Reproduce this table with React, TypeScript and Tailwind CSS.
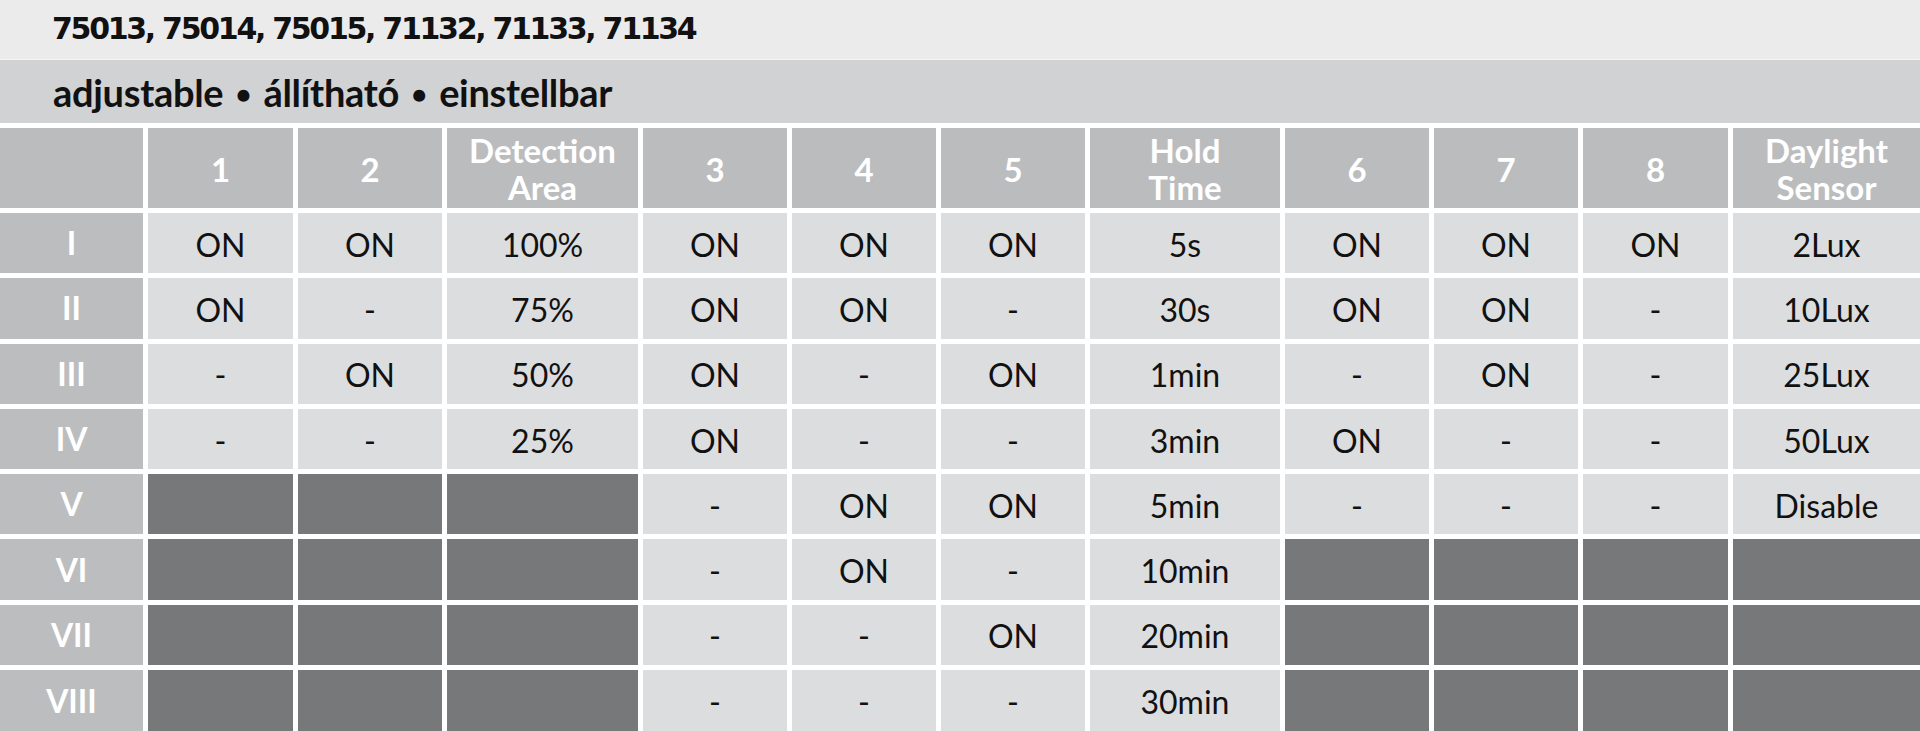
type Cell = string | null;

const HEADERS = [["1"], ["2"], ["Detection", "Area"], ["3"], ["4"], ["5"], ["Hold", "Time"], ["6"], ["7"], ["8"], ["Daylight", "Sensor"]];

// null = dark (not available) cell
const ROWS: { label: string; cells: Cell[] }[] = [
  { label: "I", cells: ["ON", "ON", "100%", "ON", "ON", "ON", "5s", "ON", "ON", "ON", "2Lux"] },
  { label: "II", cells: ["ON", "-", "75%", "ON", "ON", "-", "30s", "ON", "ON", "-", "10Lux"] },
  { label: "III", cells: ["-", "ON", "50%", "ON", "-", "ON", "1min", "-", "ON", "-", "25Lux"] },
  { label: "IV", cells: ["-", "-", "25%", "ON", "-", "-", "3min", "ON", "-", "-", "50Lux"] },
  { label: "V", cells: [null, null, null, "-", "ON", "ON", "5min", "-", "-", "-", "Disable"] },
  { label: "VI", cells: [null, null, null, "-", "ON", "-", "10min", null, null, null, null] },
  { label: "VII", cells: [null, null, null, "-", "-", "ON", "20min", null, null, null, null] },
  { label: "VIII", cells: [null, null, null, "-", "-", "-", "30min", null, null, null, null] },
];

export default function App() {
  return (
    <div className="flex h-[731px] w-[1920px] flex-col overflow-hidden bg-white font-['Lato','Open_Sans',sans-serif]">
      <div className="flex h-[60px] shrink-0 items-center border-b border-[#f4f4f5] bg-[#ebebec] pl-[52px] pb-[2px]">
        <h1 className="font-['DejaVu_Sans',sans-serif] text-[30px] font-bold leading-none tracking-[-2.3px] text-[#111]">
          75013, 75014, 75015, 71132, 71133, 71134
        </h1>
      </div>
      <div className="flex h-[63px] shrink-0 items-center bg-[#d1d2d4] pl-[53px] pt-[1px]">
        <p className="text-[38px] font-bold leading-none tracking-[-0.3px] text-[#111]">
          adjustable<span className="mx-[13px] align-[4px] text-[24px]">●</span>állítható
          <span className="mx-[13px] align-[4px] text-[24px]">●</span>einstellbar
        </p>
      </div>

      <div className="grid flex-1 grid-cols-[143px_145px_144px_191px_144px_144px_144px_190px_144px_144px_145px_1fr] grid-rows-[80px_repeat(7,60.3px)_1fr] gap-[5px] pt-[5px]">
        <div className="bg-[#bbbcbe]" />
        {HEADERS.map((lines) => (
          <div
            key={lines.join(" ")}
            className="flex flex-col items-center justify-center bg-[#bbbcbe] pt-[2px] text-center text-[33px] font-bold leading-[37px] text-white"
          >
            {lines.map((l) => (
              <span key={l}>{l}</span>
            ))}
          </div>
        ))}

        {ROWS.map((row) => (
          <RowCells key={row.label} label={row.label} cells={row.cells} />
        ))}
      </div>
    </div>
  );
}

function RowCells({ label, cells }: { label: string; cells: Cell[] }) {
  return (
    <>
      <div className="flex items-center justify-center bg-[#bcbdbf] text-[32px] font-bold leading-none text-white">
        {label}
      </div>
      {cells.map((c, i) =>
        c === null ? (
          <div key={i} className="bg-[#77787a]" />
        ) : (
          <div
            key={i}
            className="flex items-center justify-center bg-[#dcddde] pt-[3px] text-[32px] leading-none text-[#111]"
          >
            {c}
          </div>
        ),
      )}
    </>
  );
}
